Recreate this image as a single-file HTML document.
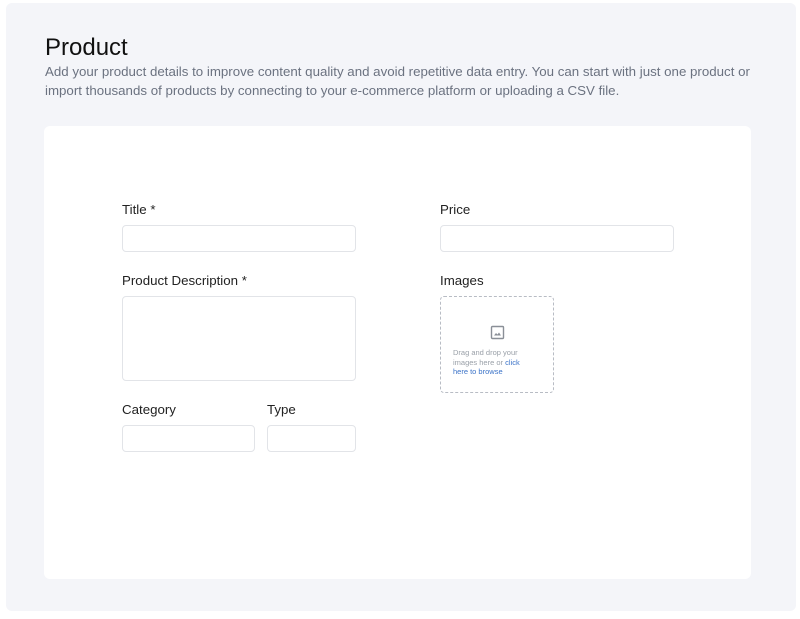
<!DOCTYPE html>
<html><head><style>
body{margin:0;width:800px;height:619px;background:#fff;font-family:"Liberation Sans",sans-serif;position:relative;overflow:hidden}
.panel{position:absolute;left:6px;top:3px;width:790px;height:608px;background:#f4f5f9;border-radius:6px}
h1{position:absolute;left:45px;top:33px;margin:0;font-size:24px;font-weight:400;color:#111;line-height:30px}
.desc{position:absolute;left:45px;top:62px;width:730px;font-size:13.3px;line-height:19px;color:#6b7280}
.card{position:absolute;left:44px;top:126px;width:707px;height:453px;background:#fff;border-radius:6px}
.l{position:absolute;font-size:13.3px;color:#222;line-height:16px}
.i{position:absolute;border:1px solid #e2e4e8;border-radius:4px;box-sizing:border-box;background:#fff}
.img{position:absolute;left:440px;top:296px;width:114px;height:97px;border:1px dashed #b8bcc4;border-radius:4px;box-sizing:border-box}
.img .t{position:absolute;left:12px;top:51px;font-size:7.5px;line-height:9.5px;color:#9aa0a8;width:78px}
.img .t span{color:#3b73c8}
</style></head><body>
<div class="panel"></div>
<h1>Product</h1>
<div class="desc">Add your product details to improve content quality and avoid repetitive data entry. You can start with just one product or import thousands of products by connecting to your e-commerce platform or uploading a CSV file.</div>
<div class="card"></div>
<div class="l" style="left:122px;top:202px">Title *</div>
<div class="i" style="left:122px;top:225px;width:234px;height:27px"></div>
<div class="l" style="left:440px;top:202px">Price</div>
<div class="i" style="left:440px;top:225px;width:234px;height:27px"></div>
<div class="l" style="left:122px;top:273px">Product Description *</div>
<div class="i" style="left:122px;top:296px;width:234px;height:85px"></div>
<div class="l" style="left:440px;top:273px">Images</div>
<div class="img">
<svg style="position:absolute;left:49px;top:28px" width="15" height="15" viewBox="0 0 15 15"><rect x="1.5" y="1.5" width="12" height="12" rx="1" fill="none" stroke="#8a8f97" stroke-width="1.4"/><path d="M4 10.5l2-2.5 1.5 1.5 1.5-2 2 3z" fill="#8a8f97"/></svg>
<div class="t">Drag and drop your images here or <span>click here to browse</span></div>
</div>
<div class="l" style="left:122px;top:402px">Category</div>
<div class="i" style="left:122px;top:425px;width:133px;height:27px"></div>
<div class="l" style="left:267px;top:402px">Type</div>
<div class="i" style="left:267px;top:425px;width:89px;height:27px"></div>
</body></html>
